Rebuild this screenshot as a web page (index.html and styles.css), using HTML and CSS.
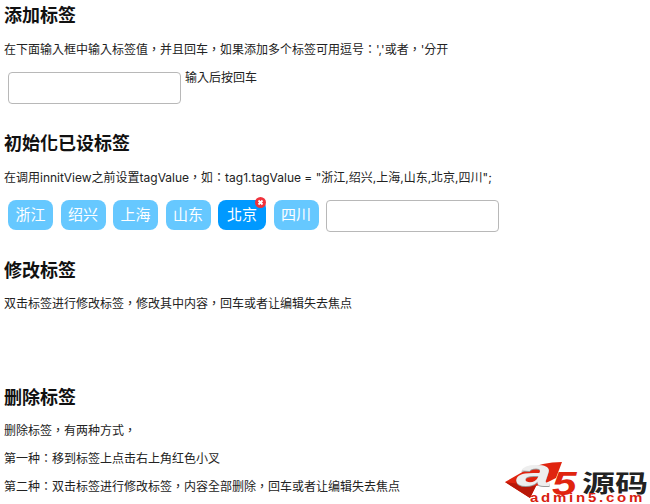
FILE: index.html
```html
<!DOCTYPE html>
<html lang="zh-TW">
  <head>
    <meta charset="UTF-8" />
    <title>标签</title>
    <link rel="stylesheet" href="styles.css">
  </head>
  <body>
    <section class="demo demo-add">
      <h2>添加标签</h2>
      <p>在下面输入框中输入标签值，并且回车，如果添加多个标签可用逗号：','或者，'分开</p>
      <div class="tag-row">
        <input class="tag-input" type="text" />
        <span class="hint">输入后按回车</span>
      </div>
    </section>

    <section class="demo demo-init">
      <h2>初始化已设标签</h2>
      <p>在调用innitView之前设置tagValue，如：tag1.tagValue = "浙江,绍兴,上海,山东,北京,四川";</p>
      <div class="tag-row">
        <span class="tag">浙江</span>
        <span class="tag">绍兴</span>
        <span class="tag">上海</span>
        <span class="tag">山东</span>
        <span class="tag active">北京
          <svg class="tag-close" viewBox="0 0 12 12" width="11" height="11">
            <circle cx="6" cy="6" r="6" fill="#f0323c" />
            <path d="M3.8 3.8L8.2 8.2M8.2 3.8L3.8 8.2" stroke="#fff" stroke-width="2" />
          </svg>
        </span>
        <span class="tag">四川</span>
        <input class="tag-input" type="text" />
      </div>
    </section>

    <section class="demo demo-edit">
      <h2>修改标签</h2>
      <p>双击标签进行修改标签，修改其中内容，回车或者让编辑失去焦点</p>
    </section>

    <section class="demo demo-remove">
      <h2>删除标签</h2>
      <p>删除标签，有两种方式，</p>
      <p>第一种：移到标签上点击右上角红色小叉</p>
      <p>第二种：双击标签进行修改标签，内容全部删除，回车或者让编辑失去焦点</p>
    </section>

    <div class="watermark">
      <svg class="wm-mark" viewBox="0 0 60 38" width="60" height="38">
        <path d="M1 20L22 8Q38 0 58 0L52 16L40 22L32 24L26 36Z" fill="#e0240f" />
        <path d="M1 20L26 36L32 24L24 23Z" fill="#b81808" />
      </svg>
      <span class="wm-a">a</span>
      <span class="wm-five">5</span>
      <span class="wm-name">源码</span>
      <span class="wm-url">admin5.com</span>
    </div>
  </body>
</html>
```

FILE: styles.css
```css
body {
  margin: 0;
  padding: 0 4px;
  font-family: Inter, "Noto Sans CJK TC", sans-serif;
  font-size: 12px;
  line-height: 16px;
  color: #222;
  background: #fff;
  height: 504px;
  overflow: hidden;
  position: relative;
}

h2 {
  margin: 0;
  font-size: 18px;
  line-height: 24px;
  font-weight: 700;
  color: #111;
}

p {
  margin: 0 0 12px;
}

.demo h2 {
  margin-bottom: 13px;
}

.demo-add {
  padding-top: 4px;
}

.demo-add h2 {
  margin-bottom: 14px;
}

.demo-init h2 {
  margin-bottom: 14px;
}

.demo-init {
  margin-top: 28px;
}

.demo-edit {
  margin-top: 27px;
}

.demo-remove {
  margin-top: 74px;
}

.tag-row {
  display: flex;
  align-items: flex-start;
  gap: 7.5px;
  padding-left: 4px;
  margin-top: 14px;
}

.demo-add .tag-row {
  gap: 4px;
}

.hint {
  margin-top: -2px;
}

.tag-input {
  width: 173px;
  height: 32px;
  box-sizing: border-box;
  border: 1px solid #b8b8b8;
  border-radius: 4px;
  padding: 0 6px;
  background: #fff;
}

.tag {
  position: relative;
  width: 45px;
  height: 30px;
  line-height: 30px;
  text-align: center;
  font-size: 15px;
  color: #fff;
  background: #66c8ff;
  border-radius: 8px;
}

.tag.active {
  width: 48px;
  background: #0099ff;
}

.tag-close {
  position: absolute;
  top: -3px;
  right: 0;
}

.watermark {
  position: absolute;
  left: 504px;
  top: 462px;
  width: 146px;
  height: 42px;
}

.wm-mark {
  position: absolute;
  left: 0;
  top: 0;
}

.wm-a {
  position: absolute;
  left: 12px;
  top: -8px;
  font: italic 700 38px/38px "Liberation Sans", sans-serif;
  color: #eee;
  text-shadow: 0 1px 0 #999;
  transform: scaleX(1.7);
  transform-origin: left top;
}

.wm-five {
  position: absolute;
  left: 48px;
  top: 10px;
  font: italic 700 34px/22px "Liberation Sans", sans-serif;
  color: #e0240f;
  transform: scaleX(1.3);
  transform-origin: left top;
}

.wm-name {
  position: absolute;
  left: 78px;
  top: 9px;
  font: 700 24px/22px "Noto Sans CJK SC", sans-serif;
  color: #222;
  transform: scaleX(1.38);
  transform-origin: left top;
}

.wm-url {
  position: absolute;
  left: 26px;
  top: 32px;
  font: 700 12px/9px "Liberation Sans", sans-serif;
  letter-spacing: 2.2px;
  color: #d8200f;
  transform: scaleX(1.25);
  transform-origin: left top;
}
```
